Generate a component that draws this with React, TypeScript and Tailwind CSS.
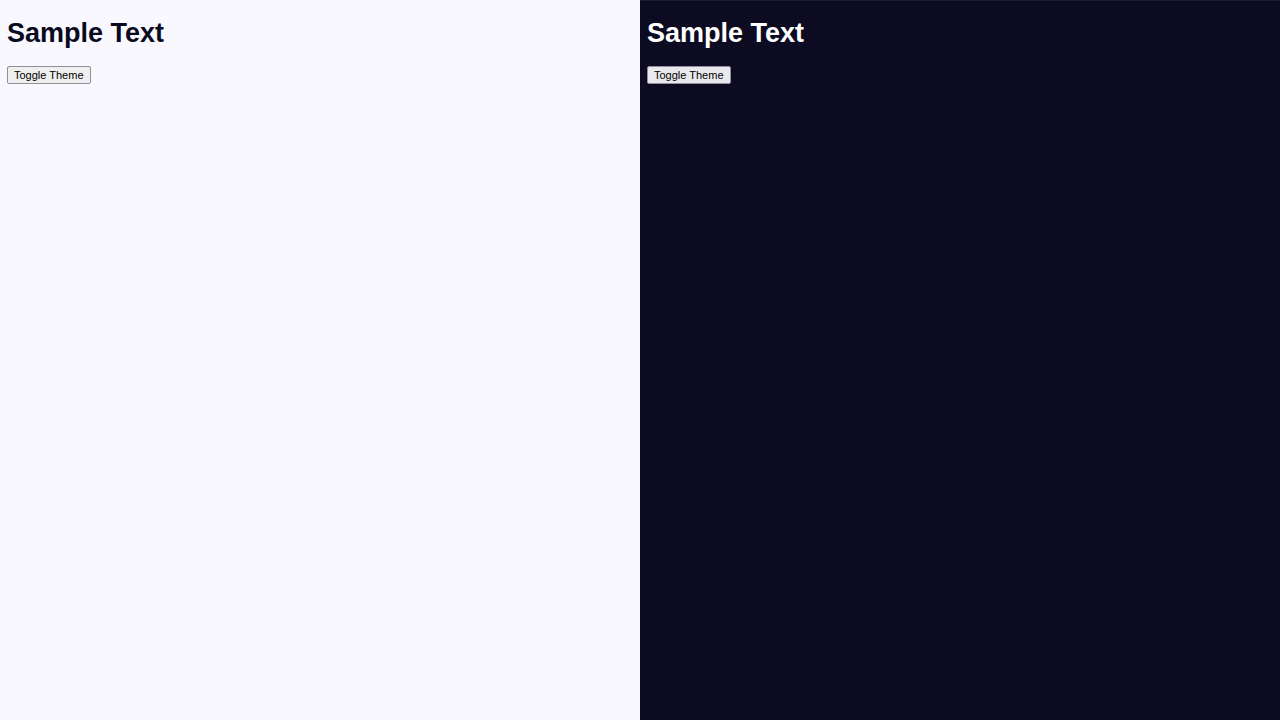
const Panel = ({ dark }: { dark: boolean }) => {
  return (
    <div
      className={
        dark
          ? "flex-1 flex flex-col items-start bg-[#0c0b21] text-white border-t border-[#1c1b33] px-[7px] pt-[17px]"
          : "flex-1 flex flex-col items-start bg-[#f8f8fe] text-[#0a0a1f] px-[7px] pt-[18px]"
      }
    >
      <h1 className="text-[27px] font-bold leading-[31px]">Sample Text</h1>
      <button
        className={
          dark
            ? "mt-[17px] px-[6px] py-[1px] text-[11px] leading-[14px] text-black bg-[#e9e9ed] border border-[#8f8f9d] rounded-[2px]"
            : "mt-[17px] px-[6px] py-[1px] text-[11px] leading-[14px] text-black bg-[#efefef] border border-[#8f8f9d] rounded-[2px]"
        }
      >
        Toggle Theme
      </button>
    </div>
  );
};

export default function App() {
  return (
    <div className="flex w-full h-[720px] font-['Liberation_Sans',Arial,sans-serif]">
      <Panel dark={false} />
      <Panel dark={true} />
    </div>
  );
}
